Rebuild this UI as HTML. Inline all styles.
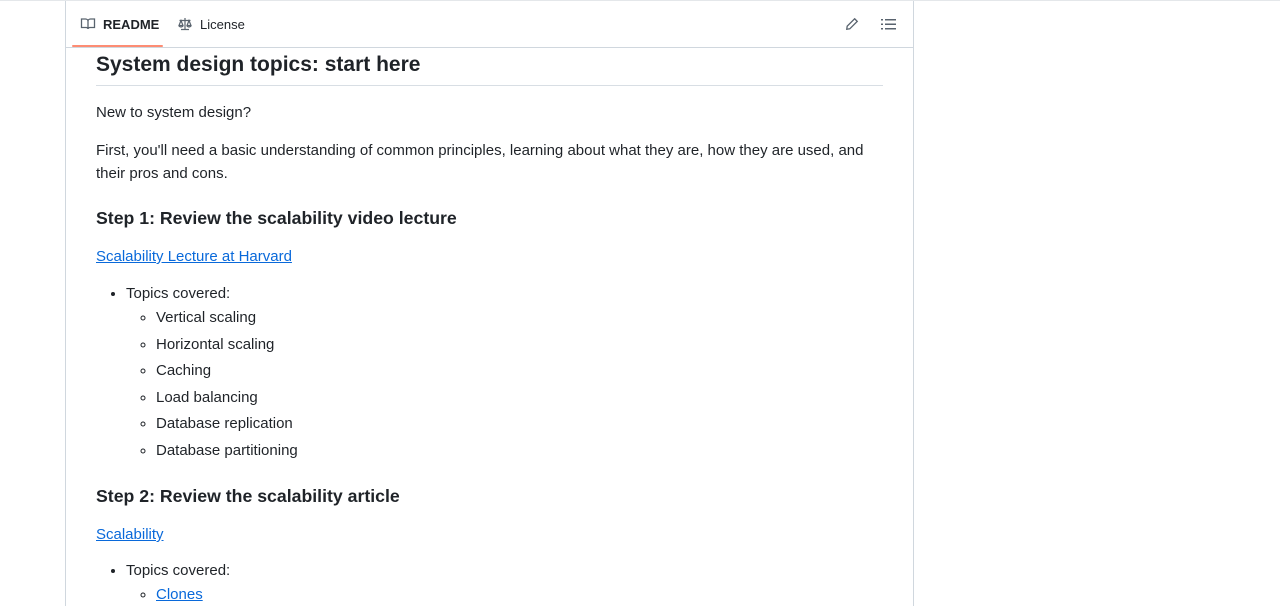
<!DOCTYPE html>
<html><head><meta charset="utf-8"><style>
body{margin:0;background:#fff;font-family:"Liberation Sans",sans-serif;color:#1f2328;width:1280px;height:605px;overflow:hidden;position:relative;border-top:1px solid #e4e7ea;box-sizing:border-box}
.box{position:absolute;left:65px;top:0;width:847px;height:605px;border-left:1px solid #d0d7de;border-right:1px solid #d0d7de}
.hdr{position:absolute;left:0;top:0;width:847px;height:46px;border-bottom:1px solid #d0d7de}
.tab{position:absolute;top:15px;font-size:13px;display:flex;align-items:center;gap:7px}
.ul{position:absolute;left:6px;top:44px;width:91px;height:2px;background:#fd8c73;border-radius:2px}
.c{position:absolute;left:30px;top:46px;width:787px;font-size:15px;line-height:23px}
h2{font-size:21px;font-weight:600;margin:0;padding:4px 0 6px;border-bottom:1px solid #d8dee4;line-height:28px}
h3{font-size:17.7px;font-weight:600;margin:0;line-height:25px}
p{margin:0}
a{color:#0969da}
ul{margin:0;padding-left:30px}
li{line-height:26.5px}
ul ul{list-style:circle}
</style></head><body>
<div class="box">
<div class="hdr">
<div class="tab" style="left:14px;font-weight:700"><svg width="16" height="16" viewBox="0 0 16 16" fill="none" stroke="#59636e" stroke-width="1.3"><path d="M1.5 3h4c1.4 0 2.5 1 2.5 2.3V13c0-.9-.8-1.5-2-1.5H1.5zM14.5 3h-4C9.1 3 8 4 8 5.3V13c0-.9.8-1.5 2-1.5h4.5z"/></svg>README</div>
<div class="tab" style="left:111px"><svg width="16" height="16" viewBox="0 0 16 16" fill="none" stroke="#59636e" stroke-width="1.2"><path d="M8 2v11M4 13.5h8M2.5 4.5h11M4 4.5l-2 5h4zM12 4.5l-2 5h4zM2 9.5a2 1.5 0 004 0M10 9.5a2 1.5 0 004 0"/></svg>License</div>
<svg style="position:absolute;left:779px;top:16px" width="14" height="14" viewBox="0 0 16 16" fill="none" stroke="#59636e" stroke-width="1.5"><path d="M11 2l3 3-8.5 8.5L2 14l.5-3.5z"/></svg>
<svg style="position:absolute;left:815px;top:16px" width="16" height="14" viewBox="0 0 16 14" fill="#59636e"><rect x="0" y="2" width="2" height="1.5"/><rect x="4" y="2" width="11" height="1.5"/><rect x="0" y="6.5" width="2" height="1.5"/><rect x="4" y="6.5" width="11" height="1.5"/><rect x="0" y="11" width="2" height="1.5"/><rect x="4" y="11" width="11" height="1.5"/></svg>
<div class="ul"></div>
</div>
<div class="c">
<h2>System design topics: start here</h2>
<p style="margin-top:15px">New to system design?</p>
<p style="margin-top:15px">First, you'll need a basic understanding of common principles, learning about what they are, how they are used, and their pros and cons.</p>
<h3 style="margin-top:21px">Step 1: Review the scalability video lecture</h3>
<p style="margin-top:14px"><a href="#">Scalability Lecture at Harvard</a></p>
<ul style="margin-top:14px"><li style="line-height:23px">Topics covered:
<ul><li>Vertical scaling</li><li>Horizontal scaling</li><li>Caching</li><li>Load balancing</li><li>Database replication</li><li>Database partitioning</li></ul></li></ul>
<h3 style="margin-top:20px">Step 2: Review the scalability article</h3>
<p style="margin-top:14px"><a href="#">Scalability</a></p>
<ul style="margin-top:13px"><li style="line-height:23px">Topics covered:
<ul><li><a href="#">Clones</a></li></ul></li></ul>
</div>
</div>
</body></html>
